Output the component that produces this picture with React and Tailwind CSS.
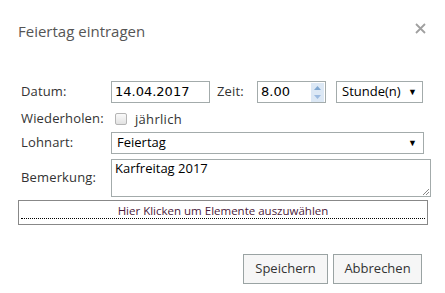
export default function App() {
  const lbl = "w-[93px] pl-[3px] text-[13px] text-[#333] font-['Open_Sans'] tracking-[0.15px]";
  const box = "border border-[#a3abab] bg-white h-[22px] flex items-center text-[13px] text-black font-['DejaVu_Sans']";
  return (
    <div className="w-[445px] h-[293px] bg-white relative overflow-hidden">
      <div className="flex items-start justify-between pl-[18px] pr-[19px] pt-[20px] h-[81px]">
        <div className="text-[15px] leading-[22px] text-[#555] font-['Open_Sans']">Feiertag eintragen</div>
        <svg width="11" height="11" viewBox="0 0 11 11" className="mt-[3px]">
          <path d="M1 1L10 10M10 1L1 10" stroke="#a0a0a0" strokeWidth="1.8" />
        </svg>
      </div>
      <div className="pl-[18px]">
        <div className="flex items-center h-[22px]">
          <div className={lbl}>Datum:</div>
          <div className={box + " w-[99px] pl-[3px] text-[12.5px]"}>14.04.2017</div>
          <div className="ml-[7px] w-[40px] text-[13px] text-[#333] font-['Open_Sans'] tracking-[0.15px]">Zeit:</div>
          <div className={box + " w-[69px] pl-[3px] justify-between pr-[1px] text-[12.5px]"}>
            <span>8.00</span>
            <div className="w-[13px] h-[19px] bg-[#dce8f5] flex flex-col items-center justify-center gap-[5px]">
              <svg width="7" height="4" viewBox="0 0 7 4"><path d="M0 4L3.5 0L7 4Z" fill="#7fa7d1" /></svg>
              <svg width="7" height="4" viewBox="0 0 7 4"><path d="M0 0L3.5 4L7 0Z" fill="#9dbbe0" /></svg>
            </div>
          </div>
          <div className={box + " ml-[10px] w-[87px] pl-[5px] pr-[5px] justify-between font-['Open_Sans']"}>
            <span>Stunde(n)</span>
            <span className="text-[9px]">▼</span>
          </div>
        </div>
        <div className="flex items-center h-[18px] mt-[7px]">
          <div className={lbl}>Wiederholen:</div>
          <div className="w-[12px] h-[12px] ml-[4px] rounded-[2px] border border-[#b5b5b5] bg-gradient-to-b from-[#fafafa] to-[#e2e2e2]"></div>
          <div className="ml-[8px] text-[13px] text-[#333] font-['Open_Sans'] tracking-[0.3px] mt-[2px]">jährlich</div>
        </div>
        <div className="flex items-center h-[22px] mt-[4px]">
          <div className={lbl}>Lohnart:</div>
          <div className={box + " w-[313px] pl-[5px] pr-[6px] justify-between font-['Open_Sans']"}>
            <span>Feiertag</span>
            <span className="text-[9px]">▼</span>
          </div>
        </div>
        <div className="flex items-center mt-[5px]">
          <div className={lbl}>Bemerkung:</div>
          <div className="relative w-[320px] h-[38px] border border-[#a3abab] px-[3px] text-[13px] leading-[16px] text-black font-['Open_Sans']">
            Karfreitag 2017
            <svg width="7" height="7" viewBox="0 0 7 7" className="absolute right-[1px] bottom-[1px]">
              <path d="M1 7L7 1M4 7L7 4" stroke="#888" strokeWidth="1" />
            </svg>
          </div>
        </div>
        <div className="mt-[3px] w-[410px] h-[25px] border border-[#888] bg-white flex flex-col items-center pt-[3px]">
          <div className="w-[404px] text-center text-[11.5px] leading-[14px] text-[#4b1a3b] font-['Open_Sans'] border-b border-dotted border-black">
            Hier Klicken um Elemente auszuwählen
          </div>
        </div>
      </div>
      <div className="flex justify-end gap-[5px] pr-[23px] mt-[29px]">
        <div className="w-[85px] h-[30px] border border-[#9aa3a3] bg-[#f6f6f6] flex items-center justify-center text-[13px] text-[#333] font-['Open_Sans']">Speichern</div>
        <div className="w-[89px] h-[30px] border border-[#9aa3a3] bg-[#f6f6f6] flex items-center justify-center text-[13px] text-[#333] font-['Open_Sans']">Abbrechen</div>
      </div>
    </div>
  );
}
